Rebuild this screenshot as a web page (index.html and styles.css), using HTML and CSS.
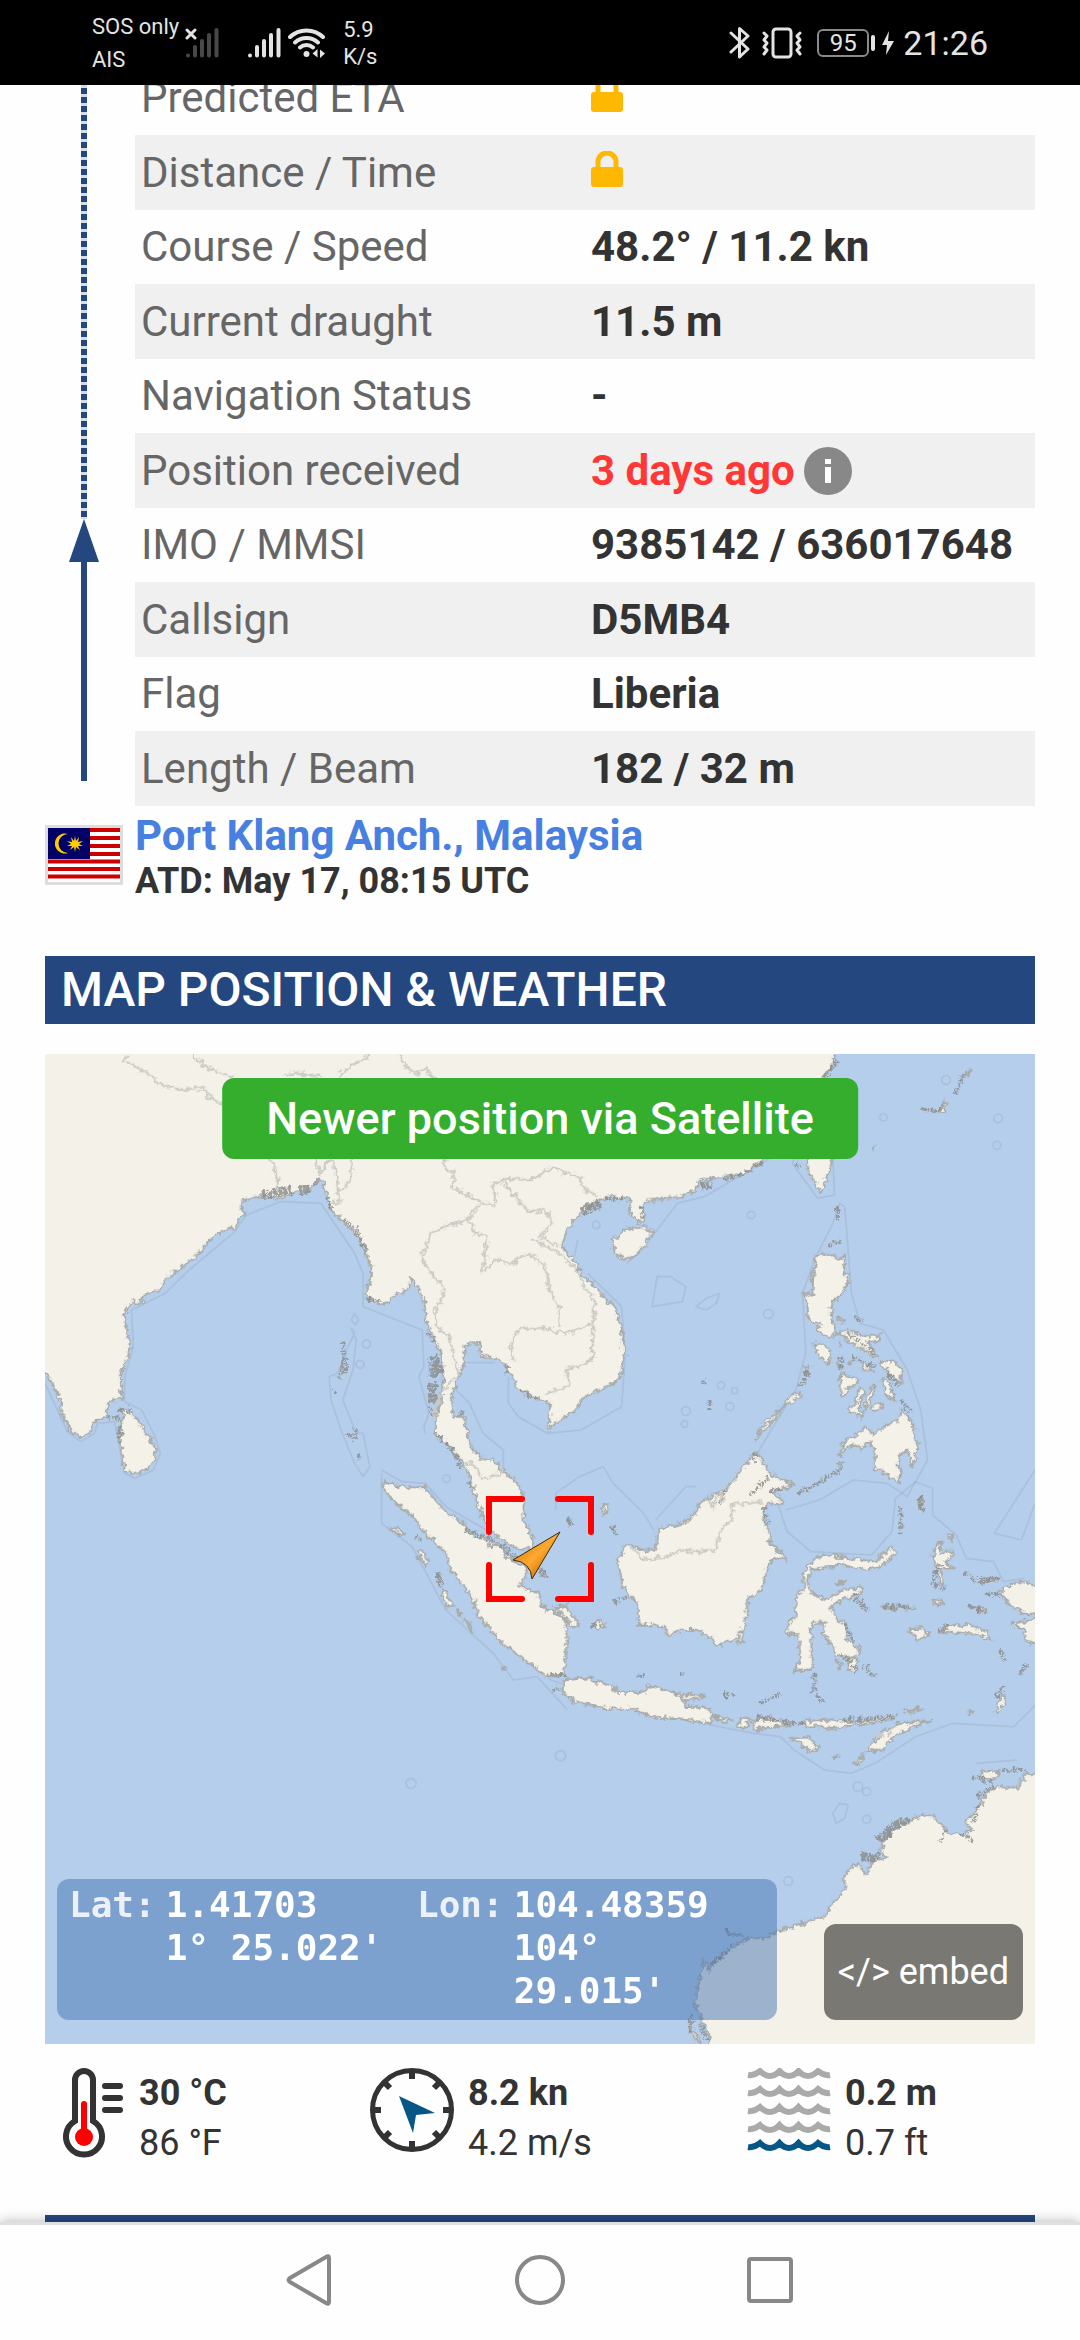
FILE: index.html
```html
<!DOCTYPE html>
<html lang="en">
<head>
    <meta charset="UTF-8">
    <meta name="viewport" content="width=device-width, initial-scale=1.0">
    <title>Vessel details</title>
    <link rel="stylesheet" href="styles.css">
</head>
<body>
    <header class="status-bar">
        <div class="carrier">SOS only<br>AIS</div>
        <svg class="signal dim" width="34" height="32" viewBox="0 0 34 32">
            <path class="cross" d="M2 3l8 8M10 3l-8 8"/>
            <path d="M3 28.500v0M10 20v8.500M17 14v14.500M24 8v20.500M31.500 3v25.500"/>
        </svg>
        <svg class="signal" width="34" height="32" viewBox="0 0 34 32">
            <path d="M3 28.500v0M10 20v8.500M17 14v14.500M24 8v20.500M31.500 3v25.500"/>
        </svg>
        <svg class="wifi" width="38" height="32" viewBox="0 0 38 32">
            <path d="M2 10a24 24 0 0 1 33 0M7 15.500a17 17 0 0 1 23 0M12 20.500a9.500 9.500 0 0 1 13 0"/>
            <circle cx="18.500" cy="27" r="3"/>
            <path class="fill" d="M29.500 22v8.500l-5-4zM32 31v-8.500l5 4z"/>
        </svg>
        <div class="speed">5.9<br>K/s</div>
        <div class="status-right">
            <svg class="bluetooth" width="22" height="34" viewBox="0 0 22 34">
                <path d="M2 7l17 16-8.500 8V2.500L19 10 2 26"/>
            </svg>
            <svg class="vibrate" width="42" height="34" viewBox="0 0 42 34">
                <rect x="12" y="3" width="18" height="28" rx="3"/>
                <path d="M3 7l3 3-3 4 3 3-3 4 3 3-3 4M39 7l-3 3 3 4-3 3 3 4-3 3 3 4"/>
            </svg>
            <div class="battery">95</div>
            <svg class="bolt" width="14" height="28" viewBox="0 0 14 28"><path d="M8 2L1 16h5L5 26l8-14H7z"/></svg>
            <div class="clock">21:26</div>
        </div>
    </header>

    <main class="content">
        <section class="voyage">
            <div class="track">
                <div class="track-dashed"></div>
                <div class="track-arrow"></div>
                <div class="track-solid"></div>
            </div>
            <table class="details">
                <tr>
                    <th scope="row">Predicted ETA</th>
                    <td><svg class="lock" width="32" height="36" viewBox="0 0 32 36"><path d="M7 18v-7a9 9 0 0 1 18 0v7"/><rect x="0" y="16" width="32" height="20" rx="3"/></svg></td>
                </tr>
                <tr>
                    <th scope="row">Distance / Time</th>
                    <td><svg class="lock" width="32" height="36" viewBox="0 0 32 36"><path d="M7 18v-7a9 9 0 0 1 18 0v7"/><rect x="0" y="16" width="32" height="20" rx="3"/></svg></td>
                </tr>
                <tr><th scope="row">Course / Speed</th><td>48.2° / 11.2 kn</td></tr>
                <tr><th scope="row">Current draught</th><td>11.5 m</td></tr>
                <tr><th scope="row">Navigation Status</th><td>-</td></tr>
                <tr>
                    <th scope="row">Position received</th>
                    <td>
                        <div class="received">
                            <span class="old">3 days ago</span>
                            <svg class="info" width="48" height="48" viewBox="0 0 48 48"><circle cx="24" cy="24" r="24"/><path d="M21 12h6v5h-6zM21 20h6v16h-6z"/></svg>
                        </div>
                    </td>
                </tr>
                <tr><th scope="row">IMO / MMSI</th><td>9385142 / 636017648</td></tr>
                <tr><th scope="row">Callsign</th><td>D5MB4</td></tr>
                <tr><th scope="row">Flag</th><td>Liberia</td></tr>
                <tr><th scope="row">Length / Beam</th><td>182 / 32 m</td></tr>
            </table>
        </section>

        <section class="departure">
            <svg class="flag" width="72" height="54" viewBox="0 0 72 54">
                <path fill="#fff" d="M0 0h72v54H0z"/>
                <path stroke="#c00" stroke-width="4" d="M0 2h72M0 10h72M0 18h72M0 26h72M0 33.500h72M0 41h72M0 48.500h72"/>
                <path fill="#006" d="M0 0h42v31H0z"/>
                <path fill="#fc0" d="M20 6a10 10 0 1 0 0 19 8.500 8.500 0 1 1 0-19z"/>
                <path fill="#fc0" d="M27 8l1 5 3-4-1 5 5-1-4 3 4 2-5 0 2 4-4-3-1 5-1-5-4 3 2-4-5 0 4-2-4-3 5 1-1-5 3 4z"/>
            </svg>
            <div>
                <a class="port" href="#">Port Klang Anch., Malaysia</a>
                <div class="atd">ATD: May 17, 08:15 UTC</div>
            </div>
        </section>

        <h2 class="section-title">MAP POSITION &amp; WEATHER</h2>

        <section class="map">
            <svg class="chart" viewBox="44 42 2929 2970" preserveAspectRatio="none">
                <filter id="coast" filterUnits="userSpaceOnUse" x="0" y="0" width="3020" height="3060">
                    <feTurbulence type="fractalNoise" baseFrequency="0.060" numOctaves="3" seed="4"/>
                    <feDisplacementMap in="SourceGraphic" scale="26" xChannelSelector="R" yChannelSelector="G"/>
                </filter>

                <!-- maritime limits -->
                <g class="limits">
                    <path d="M44 1030L85 1120 110 1175 150 1205 190 1180 200 1150 250 1145 270 1250 280 1300 310 1315 365 1290 385 1240 370 1190 330 1110 280 1085 280 1010 305 920 300 810 400 760 470 690 600 580 640 525 740 485 860 490 900 550 960 640 985 700 985 800 1160 870 1165 980 1150 1010 1180 1120 1165 1160 1170 1180"/>
                    <path d="M960 820l12 20-10 15-12-15zM950 865l10 15-20 40-30 80-25 10 5 70 30 90 40 100 25 40 20-30-20-100-20 0-40-100 30-90 10-90zM1040 1290l60 35 70 5 60 70 120 70M1040 1300v150l90 70 100 190 140 130 60 80 70-10 90 100"/>
                    <path d="M1260 1050l40 40 40 90 60 50 0 60M1285 968h90M1415 1010v80l30 40 85 50 100-10 120-70 10-150 -10-150-100-100M1620 600l-10 50M1915 490l-90 120-60 60M1915 490l80-20 200-120M2265 350l-10 20 75 105 50-10-5-110M2395 490l-20 60-50 100-40 110 10 180-30 110-60 100-60 100-10 60-60 40-70 120-80 60M2395 490l15 10 20 260 25 90 70 20 70 120 40 120 20 150-60 110-60-40-100-10-100 60-100 30"/>
                    <path d="M1855 710l40 0 45 30-10 45-90 15zM1970 800l30-25 40-15-10 30-30 20zM1845 1470l-30-50-90-90-30-50-70 30-70 50 0 50M1970 1340h-30l-90 100"/>
                    <path d="M2210 1385l30 90 70 60 180 10 60-70 10-100 60-50 50 20 0 80 70 60 30 70 80 10 30 60 60-10M2973 1290l-120 190 80 20 40-110M1480 1840l60 80 180 60 220 60 200 40 80 10 40 40 90 60 80 10 70-30 120-80 110-40 180 10 60-60 60-70"/>
                    <path d="M2375 2320l20-30 25 5-10 40-25 15zM2800 2170l120-10"/>
                    <circle cx="995" cy="912" r="12"/><circle cx="976" cy="973" r="12"/><circle cx="1232" cy="1316" r="11"/>
                    <circle cx="1675" cy="555" r="11"/><circle cx="2133" cy="525" r="11"/><circle cx="2184" cy="822" r="14"/>
                    <circle cx="2044" cy="1036" r="11"/><circle cx="2084" cy="1052" r="9"/><circle cx="2070" cy="1100" r="12"/>
                    <circle cx="1940" cy="1113" r="13"/><circle cx="1936" cy="1152" r="10"/><circle cx="2710" cy="120" r="13"/>
                    <circle cx="2864" cy="235" r="13"/><circle cx="2860" cy="316" r="12"/><circle cx="2525" cy="232" r="11"/>
                    <circle cx="1127" cy="2230" r="15"/><circle cx="1569" cy="2147" r="15"/><circle cx="2449" cy="2240" r="14"/>
                    <circle cx="2475" cy="2255" r="12"/><circle cx="2475" cy="2338" r="12"/><circle cx="2243" cy="2523" r="13"/>
                </g>

                <g class="land" filter="url(#coast)">
                    <!-- mainland Asia -->
                    <path d="M20 20L20 960 44 998 68 1035 85 1075 95 1125 125 1175 150 1192 180 1175 188 1148 225 1130 222 1118 240 1080 270 1075 268 1000 290 950 295 910 283 860 280 820 290 795 305 785 325 792 345 760 390 748 395 720 440 690 490 650 545 585 605 563 632 520 622 495 635 480 685 465 730 475 780 460 820 455 845 430 852 415 868 430 878 470 900 520 930 550 965 580 990 625 1010 690 1000 740 995 775 1050 795 1075 770 1115 750 1130 712 1150 745 1165 780 1175 850 1190 890 1215 930 1222 1000 1218 1080 1200 1130 1200 1180 1240 1215 1275 1260 1300 1300 1318 1370 1345 1450 1380 1485 1440 1525 1494 1530 1485 1490 1460 1440 1460 1370 1440 1325 1400 1295 1370 1260 1330 1252 1300 1210 1283 1130 1250 1130 1245 1080 1262 1020 1285 970 1285 915 1335 910 1332 950 1380 955 1410 980 1440 1040 1480 1065 1540 1090 1530 1170 1574 1135 1614 1110 1634 1072 1699 1045 1744 1020 1759 950 1749 860 1729 800 1684 755 1634 705 1609 660 1574 620 1589 565 1629 520 1679 485 1719 468 1779 480 1774 510 1794 548 1819 540 1809 500 1824 485 1919 470 1969 450 1979 420 2019 415 2119 400 2169 360 2260 260 2340 115 2375 80 2384 20z"/>
                    <path d="M270 1105L300 1115 335 1165 370 1220 370 1255 350 1285 305 1303 280 1290 270 1240 265 1170 278 1140z"/>

                    <!-- Hainan, Taiwan, Philippines -->
                    <g transform="translate(1479 0)">
                        <path d="M245 600L275 570 340 560 360 575 340 620 295 658 250 640z"/>
                        <path d="M820 340L895 340 890 380 860 455 825 400z"/>
                        <path d="M845 645L880 640 920 655 932 645 928 690 942 715 930 755 895 785 890 820 905 885 880 895 850 870 860 845 825 845 820 790 808 760 835 770 838 700z"/>
                        <path d="M905 880L945 870 985 890 1035 885 1035 905 1000 905 1025 955 970 920 930 890z"/>
                        <path d="M838 910L870 912 890 935 885 975 860 955zM800 1055L800 1070 750 1100 720 1140 680 1180 668 1200 685 1160 740 1105 770 1070zM810 985l20-5-10 20z"/>
                        <path d="M920 1000L975 1020 945 1050 918 1068zM970 1045L990 1050 975 1095 980 1135 940 1110 965 1090zM1020 1035L1015 1070 985 1120 1000 1060zM1010 1105L1025 1090 1045 1100 1025 1112z"/>
                        <path d="M1040 1010L1065 1030 1080 1080 1055 1070zM1035 962L1080 962 1100 990 1098 1035 1060 1000zM985 965l35 30-40-10zM915 910l8 5-8 8zM915 955l-5 25 3-25zM945 962l6 6-6 5z"/>
                        <path d="M1098 1108L1130 1145 1140 1200 1148 1225 1130 1280 1120 1235 1095 1240 1090 1280 1100 1295 1090 1325 1050 1300 1020 1285 1020 1240 1002 1205 985 1225 960 1215 935 1222 922 1250 918 1245 925 1205 960 1185 990 1165 1012 1175 1012 1190 1060 1150 1090 1145z"/>
                        <path d="M910 1270l20-5-10 15zM910 830l20 10-12 5zM1285 105l20-18-5 12zM1210 215l15-30 10 5-12 30zM1010 325l15-5-12 8z"/>
                    </g>

                    <!-- Sumatra -->
                    <g transform="translate(0 1320) scale(1 1.110)">
                        <path d="M1045 0L1080 15 1120 20 1165 18 1195 50 1230 85 1280 115 1300 145 1340 158 1395 180 1430 220 1475 240 1450 285 1480 300 1508 305 1509 340 1579 370 1589 405 1579 530 1519 525 1480 495 1400 445 1330 370 1305 310 1245 245 1225 190 1175 150 1130 95 1085 65 1050 30z"/>
                        <path d="M1070 125l40 20-10 6-30-16zM1145 190l15 0 18 30-5 12-25-30zM1222 300l15 10 12 30-15 5-18-30zM1260 350l15 12-5 6zM1285 375l10 5 15 25-5 5zM1395 505l12 5-10 4zM1400 190l12 8 25 20-30-8zM1355 165l15 5-5 14-10-4z"/>
                    </g>

                    <!-- Borneo, Java, Sulawesi, Papua, Australia -->
                    <g transform="translate(1479 1320) scale(1 1.110)">
                        <path d="M672-76L700-27 730-9 780 14 720 32 750 60 700 65 690 100 715 155 705 165 765 215 715 215 695 250 690 295 645 320 635 395 605 430 548 450 545 430 490 405 450 405 405 420 400 395 325 390 315 330 275 290 260 220 285 170 330 190 370 190 380 130 465 115 520 50 575 30 600 0 650-55z"/>
                        <path d="M70 345L105 340 145 390 120 395 100 365zM190 390L205 378 225 395 200 405zM615 415l12-10 3 35-12 2zM212 75l15-10 5 15-12 12z"/>
                        <path d="M105 540L165 535 235 555 265 575 335 575 355 555 440 580 460 610 535 620 535 658 480 650 360 640 310 620 215 615 130 600 90 570z"/>
                        <path d="M450 580L515 582 500 592 455 592zM540 640L595 645 575 657zM625 645L650 645 635 670 615 665zM655 655L700 640 760 655 765 665 700 668 665 678z"/>
                        <path d="M805 650L870 648 960 655 1075 640 1070 648 960 665 890 670 815 665zM770 697L820 695 858 725 830 735 800 712zM1185 648L1080 660 1040 685 995 735 1040 730 1090 685zM990 740L955 765 975 765zM1110 625L1160 615 1130 628zM895 750l20-4-12 7z"/>
                        <path d="M825 230L865 200 920 208 1020 220 1075 180 1080 195 1040 235 990 242 920 230 835 240 818 270 830 305 875 325 930 295 985 290 975 305 920 325 885 345 935 400 935 430 975 455 960 480 900 475 895 445 865 415 870 385 830 390 835 515 785 515 800 480 795 420 760 415 765 385 785 370 790 310 812 295 808 250z"/>
                        <path d="M905 490L925 495 915 510zM940 480L970 485 965 515 945 515zM1035 340L1080 345 1140 345 1060 350zM1190 320L1225 328 1205 338zM900 280l35-8-20 12z"/>
                        <path d="M1200 180L1215 165 1215 200 1250 190 1250 205 1225 225 1260 240 1215 240 1225 285 1210 275 1205 240 1190 210zM1235 145L1252 145 1245 165zM1155 50l6 0 0 30-8-5z"/>
                        <path d="M1120 405L1155 400 1180 415 1150 432zM1215 410L1235 395 1300 390 1350 410 1365 432 1320 415 1260 412zM1310 345l35 0-5 12zM1345 265l40 0-20 10zM1400 575L1408 600 1380 635 1375 625zM1300 620l12 4-8 6z"/>
                        <path d="M1520 290L1445 275 1385 300 1430 345 1460 362 1520 362zM1520 370L1425 388 1460 405 1465 435 1520 445z"/>
                        <path d="M1520 810L1470 790 1445 830 1380 830 1345 850 1320 890 1290 930 1310 945 1285 960 1235 950 1195 910 1165 903 1100 930 1060 960 1035 1000 1055 1020 1010 1030 995 1068 965 1035 925 1075 935 1105 900 1140 870 1180 780 1205 730 1222 690 1240 650 1235 540 1300 530 1325 515 1295 505 1340 485 1415 530 1500 528 1560 1520 1560zM1325 805L1345 785 1390 790 1370 810zM470 1480l10 0 25 40-10 0z"/>
                    </g>
                </g>

                <!-- deltas and archipelagos too small to outline -->
                <g class="reefs" filter="url(#coast)">
                    <path class="wide" d="M688 465L775 448M795 452L825 450"/>
                    <path d="M845 415v20M925 540L965 565 980 615 995 632M1000 780h40M878 470l20 45M925 905L932 950 915 1020M930 970v30M905 1050v12M935 1180l25 15M962 1165v30M970 1240l8 15M1178 880l15 30"/>
                    <path class="wide" d="M1190 950L1215 1000M1195 970v40M1190 1030v60"/>
                    <path d="M1175 1100l20 30M1205 1180l10 25M1215 1190l55 70M1265 1270l15 15M1300 1325v15M1275 1110l5 20M1410 980v25M1450 1050l50 30M265 1110h30M225 1130l50 10M265 1165v40M1285 1470l90 30M1395 1515l50 40M1500 1560l20 50M1485 1580l50 30"/>
                    <path class="wide" d="M1985 440L2015 430M1635 515L1685 490M1590 1450l20-5"/>
                    <path d="M2050 420l70-20M2120 395l50-35M2350 110l40-50M1700 475h60M1810 500v35M2270 370l8 20M2390 500v45M2360 620l40-20M2300 990l-20 50M2290 1000h20M2420 880l80 60M2400 950v40M2430 950l70 30M2540 1000l30 40M2575 1080l20 30M2590 1090l15 25"/>
                    <path d="M2270 1360l60-30M2330 1330l80-50M2185 1310l-60 60M2190 1350h30M2060 1350l-20 40M2145 1240v30M2170 1400l10 50M2575 1400v80M2636 1370v40M2690 190l15 10M2735 160l30-65M2640 210h60M2440 830l20 15M2000 1020l-10 20M2010 1080v30"/>
                    <path d="M2690 1570l-20 60 40 20M2760 1600l60 30M2810 1620l60-5M2830 1660l40 5M2780 1700l50 15M2930 1900l20-30M2860 1970l20-30M2690 1775l30-20M2870 1830l15 30M2440 1680l40 30M2440 1660l30 40M2400 1840l50 50M2470 1880l30 30M2410 1750l30 60M2520 1700l80 0"/>
                    <path d="M2150 2030l100 20M2230 2050h60M2400 2040l160-10M2320 1900v60M2325 1970l30 20M2050 1965h40M2160 1990l60-30M1540 1900l50 10M1545 1950h20M1800 1905h20M1925 1903h8M1660 1755h30M1730 1690l40-20M1720 1460l20 30M2790 2210l60 20M2880 2190h70M2800 2270l50-30"/>
                    <path class="wide" d="M2535 2370L2600 2340M2460 2450L2510 2455M2510 2400l40-30"/>
                    <path d="M2710 2370l-20 40M2750 2380l40 20M2790 2350l20-60M2070 2680l50 10M2020 2770l60-50M1980 2950l30 60M1955 2920v60M2065 2670v20M1140 1490l15 10M1200 1600l20 30M1210 1600l5 40"/>
                </g>

                <g class="borders" filter="url(#coast)">
                    <path d="M290 42L278 62 340 95 400 140 450 150 510 145 540 180 600 200M480 42l15 20 45 30 60 20M750 110l30-10 80 10M915 108l40-35 50-25M1095 42l15 40 40 20 20-15 30 30"/>
                    <path d="M705 350l20 30 8 75M840 355l20 45 30-45M895 355l12 60 8 75-20-5M955 355l-10 70-30 30M1225 355l5 35 30 10-15 40 50 25 40 20 35 10 10-15-10-45 25-15 60 70 20 25 50-5 20 40-40 40 60 30"/>
                    <path d="M1390 430l10-15 80 5 70-40 30 20 50 10 0 30 50 30M1330 490l-30 45-50 15-65 30-15 50-15 15 20 40 45 50 5 35-30 40 10 50 35 30 25 110-60 80-10 60M1300 540l15 40 35 10-5 75-10 30 55-40 30 20 40-30 40 10 30 40 5 60 30 40 0 60M1480 595l80 40 60 60 20 45 30 40-5 70-75 30-80-15-60 0-30 40 10 60M1665 850l0 110-80 30 10 50-70 20M1285 1265l20 5 35 45 50-10 5-20"/>
                    <g transform="translate(1479 1320) scale(1 1.110)">
                        <path d="M290 175L340 215 400 210 440 190 500 195 545 190 570 130 595 110 600 65 690 60M525 50l15 25 10-30M560 30l15 30M1070 665l-5 25M1015 685l30 5"/>
                    </g>
                </g>
            </svg>

            <div class="newer">Newer position via Satellite</div>

            <svg class="vessel" width="108" height="108" viewBox="0 0 108 108">
                <defs>
                    <linearGradient id="hull" x1="0" y1="0" x2="1" y2="1">
                        <stop offset="0.300" stop-color="#e8921c"/>
                        <stop offset="0.500" stop-color="#ffa930"/>
                        <stop offset="0.700" stop-color="#d98210"/>
                    </linearGradient>
                </defs>
                <path class="target" d="M36 4H3V37M72 4H105V37M3 70V104H36M105 70V104H72"/>
                <path class="ship" fill="url(#hull)" d="M74 37L46 84Q45 67 27 65z"/>
            </svg>

            <div class="coords">
                <div class="coord"><span class="coord-label">Lat:</span><div>1.41703<br>1° 25.022'</div></div>
                <div class="coord"><span class="coord-label">Lon:</span><div>104.48359<br>104° 29.015'</div></div>
            </div>
            <button class="embed" type="button">&lt;/&gt; embed</button>
        </section>

        <section class="weather">
            <div class="reading">
                <svg width="62" height="90" viewBox="0 0 62 90">
                    <path fill="none" stroke="#333" stroke-width="6" d="M12 53V12a9 9 0 0 1 18 0v41a18 18 0 1 1-18 0z"/>
                    <path stroke="#f00" stroke-width="6" stroke-linecap="round" d="M21 36v30"/>
                    <circle cx="21" cy="69" r="9" fill="#f00"/>
                    <path stroke="#333" stroke-width="6" stroke-linecap="round" d="M42 18h15M42 30h15M42 42h15"/>
                </svg>
                <p><strong>30 °C</strong><br>86 °F</p>
            </div>
            <div class="reading">
                <svg width="84" height="84" viewBox="0 0 84 84">
                    <circle cx="42" cy="42" r="39.500" fill="none" stroke="#333" stroke-width="5"/>
                    <path stroke="#333" stroke-width="6" d="M42 2v9M42 73v9M2 42h9M73 42h9M14 14l6 6M64 64l6 6M70 14l-6 6M20 64l-6 6"/>
                    <path fill="#065686" d="M29 28L65 45 46 47 43 65z"/>
                </svg>
                <p><strong>8.2 kn</strong><br>4.2 m/s</p>
            </div>
            <div class="reading">
                <svg class="waves" width="84" height="84" viewBox="0 0 84 84">
                    <defs><path id="wave" d="M1 7Q7 8 13 3 18 8 23 8 28 8 32.500 3 37 8 42 8 47 8 51.500 3 56 8 61 8 66 8 71 3 77 8 83 7"/></defs>
                    <use href="#wave"/><use href="#wave" y="18"/><use href="#wave" y="36"/><use href="#wave" y="54"/>
                    <use class="deep" href="#wave" y="72"/>
                </svg>
                <p><strong>0.2 m</strong><br>0.7 ft</p>
            </div>
        </section>
        <div class="next-section"></div>
    </main>

    <nav class="nav-bar">
        <button type="button" aria-label="Back"><svg width="50" height="54" viewBox="0 0 50 54"><path d="M44 5v44q0 3-3 1L5 29q-3-2 0-4L41 4q3-2 3 1z"/></svg></button>
        <button type="button" aria-label="Home"><svg width="50" height="54" viewBox="0 0 50 54"><circle cx="25" cy="27" r="23"/></svg></button>
        <button type="button" aria-label="Recent apps"><svg width="50" height="54" viewBox="0 0 50 54"><rect x="4" y="6" width="42" height="42" rx="2"/></svg></button>
    </nav>
</body>
</html>
```

FILE: styles.css
```css
* {
    box-sizing: border-box;
}
body {
    margin: 0;
    height: 100vh;
    display: flex;
    flex-direction: column;
    font-family: Roboto, "Liberation Sans", sans-serif;
    background-color: #fefefe;
    color: #333;
}
svg {
    display: block;
    flex: none;
}

/* status bar */
.status-bar {
    flex: none;
    display: flex;
    align-items: center;
    height: 85px;
    padding: 0 92px;
    background-color: #000;
    color: #e4e4e4;
}
.carrier {
    font-size: 22px;
    line-height: 33px;
}
.signal {
    fill: none;
    stroke: #e4e4e4;
    stroke-width: 4;
    stroke-linecap: round;
    margin-left: 28px;
}
.signal.dim {
    stroke: #484848;
    margin-left: 6px;
}
.signal .cross {
    stroke: #e4e4e4;
    stroke-width: 3;
}
.wifi {
    margin-left: 7px;
    fill: none;
    stroke: #e4e4e4;
    stroke-width: 4;
    stroke-linecap: round;
}
.wifi circle, .wifi .fill {
    fill: #e4e4e4;
    stroke: none;
}
.speed {
    font-size: 22px;
    line-height: 27px;
    margin-left: 17px;
}
.status-right {
    display: flex;
    align-items: center;
    margin-left: auto;
}
.bluetooth, .vibrate {
    fill: none;
    stroke: #e4e4e4;
    stroke-width: 3;
    stroke-linejoin: round;
    stroke-linecap: round;
}
.vibrate {
    margin: 0 14px 0 10px;
}
.battery {
    position: relative;
    width: 52px;
    height: 28px;
    border: 2px solid #8a8a8a;
    border-radius: 6px;
    font-size: 24px;
    line-height: 24px;
    text-align: center;
}
.battery::after {
    content: "";
    position: absolute;
    right: -8px;
    top: 4px;
    width: 4px;
    height: 16px;
    border-radius: 2px;
    background-color: #e4e4e4;
}
.bolt {
    fill: #e4e4e4;
    margin: 0 8px 0 12px;
}
.clock {
    font-size: 34px;
}

/* scrolled page */
.content {
    flex: 1;
    min-height: 0;
    overflow: hidden;
    padding: 0 45px;
}
.voyage {
    display: flex;
    margin-top: -24px;
}
.track {
    flex: none;
    width: 90px;
    padding: 0 12px 25px 0;
    display: flex;
    flex-direction: column;
    align-items: center;
}
.track-dashed {
    flex: 459;
    width: 6px;
    background: repeating-linear-gradient(#25477f 0 6px, #d5dce7 6px 9px);
}
.track-arrow {
    border: 15px solid transparent;
    border-top: 0;
    border-bottom: 43px solid #25477f;
}
.track-solid {
    flex: 219;
    width: 6px;
    background-color: #25477f;
}
.details {
    flex: 1;
    border-collapse: collapse;
    font-size: 42px;
    line-height: 50px;
    text-align: left;
}
.details tr {
    height: 74px;
}
.details tr:nth-child(even) {
    height: 75px;
    background-color: #f0f0f0;
}
.details th, .details td {
    padding: 0 6px;
}
.details th {
    width: 50%;
    font-weight: 400;
    color: #666;
}
.details td {
    font-weight: 700;
    white-space: nowrap;
}
.lock {
    margin-bottom: 8px;
    fill: #ffb800;
}
.lock path {
    fill: none;
    stroke: #ffb800;
    stroke-width: 5;
}
.received {
    display: flex;
    align-items: center;
    gap: 9px;
}
.old {
    color: #ff3835;
}
.info {
    fill: #888;
}
.info path {
    fill: #fff;
}
.departure {
    display: flex;
    gap: 12px;
    padding-top: 7px;
}
.flag {
    width: 78px;
    height: 60px;
    margin-top: 12px;
    border: 3px solid #ddd;
}
.port {
    display: block;
    font-size: 42px;
    line-height: 46px;
    font-weight: 700;
    color: #4780e0;
    text-decoration: none;
}
.atd {
    font-size: 36px;
    line-height: 44px;
    font-weight: 700;
}
.section-title {
    margin: 53px 0 30px;
    padding: 0 16px;
    font-size: 48px;
    line-height: 68px;
    font-weight: 500;
    color: #fff;
    background-color: #25477f;
}

/* map */
.map {
    position: relative;
    aspect-ratio: 1;
    overflow: hidden;
    background-color: #b5ceec;
}
.chart {
    width: 100%;
    height: 100%;
}
.limits {
    fill: none;
    stroke: #8c96a8;
    stroke-opacity: 0.250;
    stroke-width: 5;
    stroke-linejoin: round;
}
.land {
    fill: #f4f1e8;
    stroke: #a8abaa;
    stroke-width: 6;
    stroke-linejoin: round;
}
.borders {
    fill: none;
    stroke: #cacbc5;
    stroke-width: 7;
    stroke-linejoin: round;
}
.reefs {
    fill: none;
    stroke: #8a8b88;
    stroke-opacity: 0.800;
    stroke-width: 12;
    stroke-dasharray: 9 4 5 6;
}
.reefs .wide {
    stroke-width: 26;
    stroke-dasharray: 12 3;
}
.newer {
    position: absolute;
    top: 24px;
    left: 50%;
    transform: translateX(-50%);
    padding: 0 44px;
    border-radius: 12px;
    background-color: #34ae2c;
    color: #fff;
    font-size: 45px;
    line-height: 81px;
    font-weight: 500;
    white-space: nowrap;
}
.vessel {
    position: absolute;
    top: 50%;
    left: 50%;
    transform: translate(-50%, -50%);
}
.target {
    fill: none;
    stroke: #f00;
    stroke-width: 6;
    stroke-linecap: round;
}
.ship {
    stroke: #3a2a10;
    stroke-width: 1;
}
.coords {
    position: absolute;
    left: 12px;
    right: 258px;
    bottom: 24px;
    display: flex;
    padding: 4px 12px 8px;
    border-radius: 12px;
    background-color: rgba(70, 115, 175, 0.500);
    color: #fff;
    font-family: "DejaVu Sans Mono", monospace;
    font-size: 36px;
    line-height: 43px;
    font-weight: 700;
}
.coord {
    flex: 1;
    display: flex;
    gap: 10px;
}
.coord-label {
    opacity: 0.850;
}
.embed {
    position: absolute;
    right: 12px;
    bottom: 24px;
    height: 96px;
    padding: 0 14px;
    border: none;
    border-radius: 12px;
    background-color: #7a7872;
    color: #fff;
    font-family: inherit;
    font-size: 36px;
}

/* weather */
.weather {
    display: grid;
    grid-template-columns: 307fr 377fr 288fr;
    padding: 24px 0 47px 18px;
}
.reading {
    display: flex;
    gap: 14px;
}
.reading p {
    margin: 0;
    font-size: 36px;
    line-height: 50px;
}
.waves {
    fill: none;
    stroke: #aaa;
    stroke-width: 6;
}
.waves .deep {
    stroke: #065686;
}
.next-section {
    height: 68px;
    background-color: #25477f;
}

/* system navigation */
.nav-bar {
    position: relative;
    flex: none;
    display: flex;
    justify-content: center;
    gap: 180px;
    height: 118px;
    padding-top: 28px;
    border-top: 3px solid #dfdfdf;
    background-color: #fefefe;
    box-shadow: 0 0 12px rgba(0, 0, 0, 0.300);
}
.nav-bar button {
    width: 50px;
    height: 54px;
    padding: 0;
    border: none;
    background: none;
}
.nav-bar svg {
    fill: none;
    stroke: #888;
    stroke-width: 4;
}
```
